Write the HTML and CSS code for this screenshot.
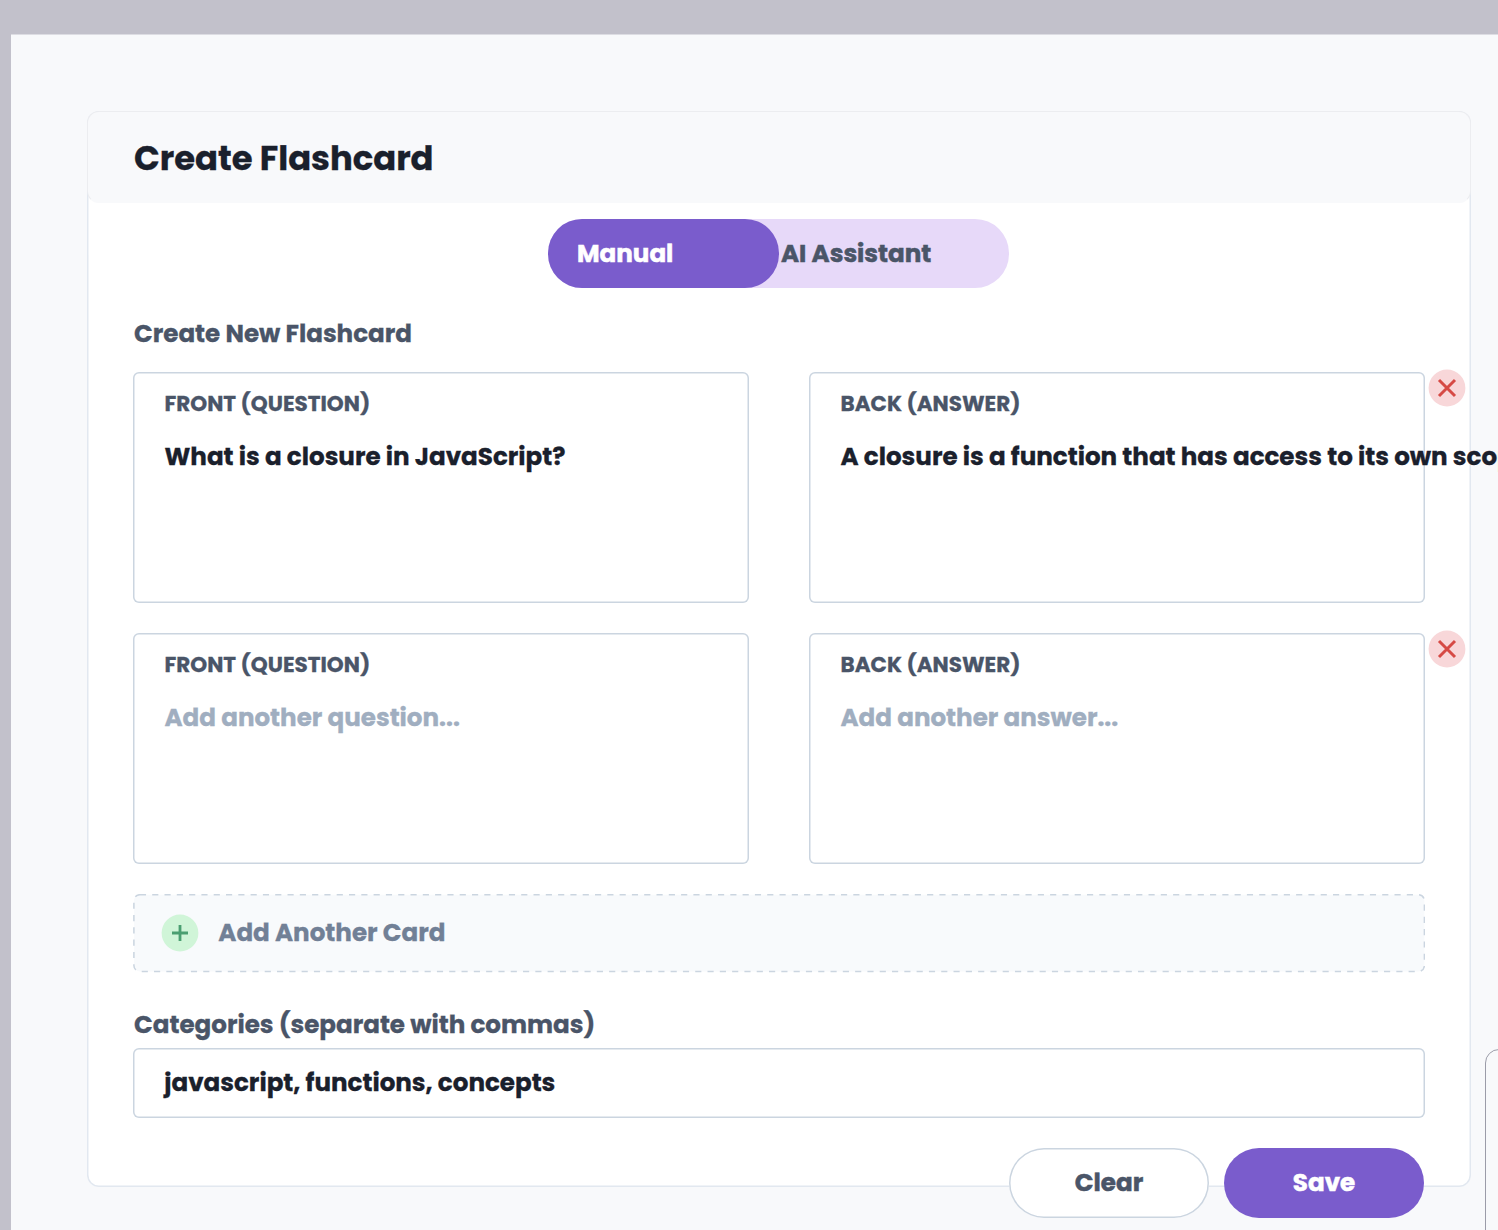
FILE: index.html
```html
<!DOCTYPE html>
<html lang="en">
<head>
<meta charset="utf-8">
<title>Create Flashcard</title>
<link rel="stylesheet" href="styles.css">
</head>
<body>
<main class="page">
  <section class="card">
    <header class="card-header"><h1 class="title">Create Flashcard</h1></header>
    <div class="toggle">
      <button class="tab tab-active">Manual</button>
      <button class="tab">AI Assistant</button>
    </div>
    <div class="content">
      <h2 class="section-title">Create New Flashcard</h2>
      <div class="pair">
        <div class="field"><div class="label">FRONT (QUESTION)</div><div class="value">What is a closure in JavaScript?</div></div>
        <div class="field"><div class="label">BACK (ANSWER)</div><div class="value">A closure is a function that has access to its own scope</div></div>
        <button class="remove" aria-label="Remove card"><svg viewBox="0 0 38 38"><circle cx="19" cy="19" r="18.4" fill="#f8d7d9"/><path d="M11 11L27 27M27 11L11 27" stroke="#d64a45" stroke-width="3"/></svg></button>
      </div>
      <div class="pair">
        <div class="field"><div class="label">FRONT (QUESTION)</div><div class="value placeholder">Add another question...</div></div>
        <div class="field"><div class="label">BACK (ANSWER)</div><div class="value placeholder">Add another answer...</div></div>
        <button class="remove" aria-label="Remove card"><svg viewBox="0 0 38 38"><circle cx="19" cy="19" r="18.4" fill="#f8d7d9"/><path d="M11 11L27 27M27 11L11 27" stroke="#d64a45" stroke-width="3"/></svg></button>
      </div>
      <div class="add">
        <svg class="dashes" viewBox="0 0 1292 79"><rect x="0.9" y="0.7" width="1290.5" height="76.8" rx="6" fill="#f8fafc" stroke="#cbd5e0" stroke-width="1.54" stroke-dasharray="6.15 6.15"/></svg>
        <svg class="plus" viewBox="0 0 38 38"><circle cx="19" cy="19" r="18.4" fill="#d0f5d8"/><path d="M11 19H27M19 11V27" stroke="#4a9f71" stroke-width="2.8"/></svg>
        <span class="add-text">Add Another Card</span>
      </div>
      <h2 class="categories-title">Categories (separate with commas)</h2>
      <div class="input">javascript, functions, concepts</div>
      <div class="actions">
        <button class="btn btn-clear">Clear</button>
        <button class="btn btn-save">Save</button>
      </div>
    </div>
  </section>
  <aside class="side"></aside>
</main>
</body>
</html>
```
FILE: styles.css
```css
* { box-sizing: border-box; }
html { overflow: hidden; }
body { margin: 0; padding: 34px 0 0 11px; width: 1498px; height: 1230px; overflow: hidden; background: #c2c1cb; font-family: Poppins, Inter, sans-serif; font-weight: 700; font-size: 24.58px; line-height: 36px; color: #1a202c; -webkit-text-stroke: 0.3px currentColor; }
button { font: inherit; color: inherit; border: 0; padding: 0; background: none; -webkit-text-stroke: 0.5px currentColor; }
h1, h2 { margin: 0; font-weight: 700; white-space: nowrap; }
.page { display: grid; grid-template-columns: 1384px 1fr; column-gap: 14px; width: 1487px; height: 1196px; padding: 76px 0 0 76px; background: #f8f9fb; border-top: 1px solid #dddde3; overflow: hidden; }
.card { height: 1076px; background: #fff; border-radius: 12px; box-shadow: inset 0 0 0 1.5px #e2e8f0; }
.card-header { height: 92px; padding: 23px 46px; background: #f8f9fb; border: 1px solid #ecedf0; border-bottom-color: transparent; border-radius: 12px; }
.title { font-size: 33.8px; line-height: 48px; }
.toggle { display: flex; width: 461px; height: 69px; margin: 16px 0 0 461px; border-radius: 34px; background: #e7d9f9; color: #4a5568; }
.tab { width: 230px; height: 69px; padding-left: 2px; text-align: left; border-radius: 34px; white-space: nowrap; }
.tab-active { width: 231px; padding-left: 29px; background: #7a5ccc; color: #fff; }
.content { padding: 28px 46px 0; color: #4a5568; }
.section-title, .categories-title { padding-left: 1px; font-size: 24.58px; }
.section-title { margin-bottom: 20px; }
.pair { position: relative; display: grid; grid-template-columns: 616px 616px; column-gap: 60px; margin-bottom: 30px; }
.field { height: 231px; padding: 14px 31.5px; border-radius: 6px; background: #fff; box-shadow: inset 0 0 0 1.5px #cbd5e0; white-space: nowrap; }
.label { font-size: 21.5px; }
.value { margin-top: 17px; color: #1a202c; }
.placeholder { color: #a0aec0; }
.remove { position: absolute; left: 1295px; top: -3px; width: 38px; height: 38px; }
.remove svg, .plus { display: block; width: 38px; height: 38px; }
.add { position: relative; display: flex; align-items: center; height: 79px; padding: 0 0 2px 28px; gap: 19.3px; color: #718096; }
.dashes { position: absolute; inset: 0; width: 1292px; height: 79px; }
.plus, .add-text { position: relative; }
.categories-title { margin: 34px 0 5px; }
.input { width: 1292px; height: 70px; padding: 17px 31.3px; border-radius: 6px; box-shadow: inset 0 0 0 1.5px #cbd5e0; color: #1a202c; }
.actions { display: flex; justify-content: flex-end; gap: 15px; margin: 30px 1px 0 0; }
.btn { width: 200px; height: 70px; border-radius: 35px; }
.btn-clear { width: 200px; background: #fff; box-shadow: inset 0 0 0 1.5px #cbd5e0; }
.btn-save { background: #7a5ccc; color: #fff; }
.side { margin: 938px -40px 0 0; height: 200px; border: 1px solid #9b9ca9; border-radius: 14px; }
```
